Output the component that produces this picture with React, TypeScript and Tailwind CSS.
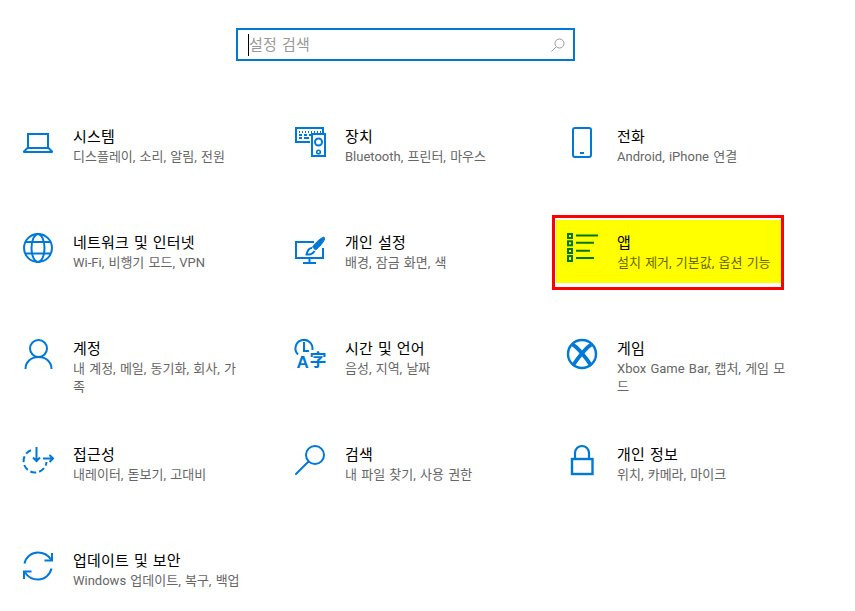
import React from 'react';

function Icon({ children }: { children: React.ReactNode }) {
  return (
    <svg width="32" height="32" viewBox="0 0 32 32" fill="none" stroke="currentColor" strokeWidth="2" className="shrink-0 overflow-visible">
      {children}
    </svg>
  );
}

const icons: Record<string, React.ReactNode> = {
  system: (
    <>
      <path d="M5 21V7h20v14" />
      <path d="M4.500 21h21l3.500 3.500V25H1v-.5z" strokeLinejoin="round" />
    </>
  ),
  devices: (
    <>
      <path d="M15 15H1V1h27v5" />
      <path d="M4 5h1M7 5h1M10 5h1M13 5h1M16 5h1M19 5h1M22 5h1M25 5h1M4 8h3M9 8h3M14 8h2M4 11h3M9 11h5" strokeWidth="1.800" />
      <rect x="17" y="7" width="13" height="22" />
      <circle cx="23.500" cy="15" r="3.500" />
      <circle cx="23.500" cy="25" r="1.800" strokeWidth="1.600" />
    </>
  ),
  phone: (
    <>
      <rect x="6" y="1" width="18" height="29" rx="2" />
      <path d="M13 26h4" />
    </>
  ),
  network: (
    <>
      <circle cx="15" cy="15" r="14" />
      <ellipse cx="15" cy="15" rx="6.500" ry="14" />
      <path d="M2.500 9h25M2.500 20.500h25" />
    </>
  ),
  personalize: (
    <>
      <path d="M19 9H1v16h27V15" />
      <path d="M14.500 25v4.500M8 30h13" />
      <path d="M29 4c-3 .8-8.500 5.500-11.500 10l3 3c3.800-2.800 8-7.800 9-10.800z" fill="currentColor" strokeWidth="1" />
      <path d="M17 15c-3 0-4.500 2-5.500 6.500 3.800.5 6.500-.8 8-3.500" strokeWidth="2" />
    </>
  ),
  apps: (
    <>
      <rect x="1" y="1" width="4" height="4" />
      <rect x="1" y="8.300" width="4" height="4" />
      <rect x="1" y="16" width="4" height="4" />
      <rect x="1" y="23" width="4" height="5" />
      <path d="M9 2.500h22M9 9.700h18M9 17.700h14M9 25h18" />
    </>
  ),
  account: (
    <>
      <circle cx="15.500" cy="9.500" r="8.500" />
      <path d="M2.500 30c0-6.500 5-12 13-12s13 5.500 13 12" />
    </>
  ),
  time: (
    <>
      <path d="M3 15.500A8.500 8.500 0 1 1 17.300 11" />
      <path d="M9 3v9h5" />
      <text x="1.500" y="29" fill="currentColor" stroke="none" fontFamily="'Liberation Sans', sans-serif" fontWeight="700" fontSize="17">A</text>
      <text x="14.500" y="26.500" fill="currentColor" stroke="none" fontFamily="'Noto Sans CJK SC', sans-serif" fontWeight="700" fontSize="17">字</text>
    </>
  ),
  xbox: (
    <>
      <circle cx="15" cy="15" r="14" strokeWidth="2.400" />
      <path d="M5.500 5.500C10 7.500 20 20 24 26.500M24.500 5.500C20 7.500 10 20 6 26.500" strokeWidth="3.800" />
    </>
  ),
  access: (
    <>
      <path d="M8 5.200A11.500 11.500 0 1 0 23.500 17" strokeDasharray="6 3" />
      <path d="M13.500 2v14M10 12.500l3.500 3.500 3.500-3.500" />
      <path d="M20 13.500h10M26.500 10l3.500 3.500-3.500 3.500" />
    </>
  ),
  search: (
    <>
      <circle cx="20" cy="10" r="9" />
      <path d="M13.500 16.500 1 29" strokeLinecap="round" />
    </>
  ),
  lock: (
    <>
      <rect x="5" y="14" width="20.500" height="15" strokeWidth="2.400" />
      <path d="M8 14V8a7 7 0 0 1 14 0v6" strokeWidth="2.200" />
    </>
  ),
  update: (
    <>
      <path d="M1.500 12.500C3 6 8.500 1.500 15 1.500c5.500 0 10 2.500 13 7" />
      <path d="M29 2v7.500h-7.500" />
      <path d="M28.500 17.500C27 24 21.500 28.500 15 28.500c-5.500 0-10-2.500-13-7" />
      <path d="M1 28v-7.500h7.500" />
    </>
  ),
};

const items = [
  { id: 'system', title: '시스템', sub: '디스플레이, 소리, 알림, 전원' },
  { id: 'devices', title: '장치', sub: 'Bluetooth, 프린터, 마우스' },
  { id: 'phone', title: '전화', sub: 'Android, iPhone 연결' },
  { id: 'network', title: '네트워크 및 인터넷', sub: 'Wi-Fi, 비행기 모드, VPN' },
  { id: 'personalize', title: '개인 설정', sub: '배경, 잠금 화면, 색' },
  { id: 'apps', title: '앱', sub: '설치 제거, 기본값, 옵션 기능', highlight: true },
  { id: 'account', title: '계정', sub: '내 계정, 메일, 동기화, 회사, 가족' },
  { id: 'time', title: '시간 및 언어', sub: '음성, 지역, 날짜' },
  { id: 'xbox', title: '게임', sub: 'Xbox Game Bar, 캡처, 게임 모드' },
  { id: 'access', title: '접근성', sub: '내레이터, 돋보기, 고대비' },
  { id: 'search', title: '검색', sub: '내 파일 찾기, 사용 권한' },
  { id: 'lock', title: '개인 정보', sub: '위치, 카메라, 마이크' },
  { id: 'update', title: '업데이트 및 보안', sub: 'Windows 업데이트, 복구, 백업' },
];

function Labels({ title, sub, subColor }: { title: string; sub: string; subColor: string }) {
  return (
    <div className="ml-[18px] w-[170px] shrink-0">
      <div className="text-[15px] leading-5 tracking-[0.2px] [word-spacing:1px] text-black">{title}</div>
      <div className={`mt-px text-[13px] leading-[18px] [word-spacing:1px] ${subColor}`}>{sub}</div>
    </div>
  );
}

function Tile({ item }: { item: (typeof items)[number] }) {
  if (item.highlight) {
    return (
      <div className="h-[75px] border-[3px] border-[#ff0000] pt-[2px] pb-1 pl-px">
        <div className="flex h-full bg-[#ffff00] pl-[11px] pt-[13px] text-[#007800]">
          <Icon>{icons[item.id]}</Icon>
          <Labels title={item.title} sub={item.sub} subColor="text-[#666600]" />
        </div>
      </div>
    );
  }
  return (
    <div className="flex h-[75px] pl-[15px] pt-[18px] text-[#0078d7]">
      <Icon>{icons[item.id]}</Icon>
      <Labels title={item.title} sub={item.sub} subColor="text-[#666666]" />
    </div>
  );
}

export default function App() {
  return (
    <div className="h-[611px] w-[855px] overflow-hidden bg-white font-['Roboto','Noto_Sans_CJK_KR',sans-serif]">
      <div className="pt-7 pl-[236px]">
        <div className="flex h-[33px] w-[339px] items-center border-2 border-[#0078d7] pl-[10px] pr-2">
          <div className="h-[22px] w-px bg-black" />
          <div className="mt-[2px] flex-1 text-[15px] tracking-[0.2px] [word-spacing:1px] text-[#999999]">설정 검색</div>
          <svg width="14" height="14" viewBox="0 0 14 14" fill="none" stroke="#999999" strokeWidth="1">
            <circle cx="8.500" cy="5.500" r="4.500" />
            <path d="M5.300 8.700.5 13.500" />
          </svg>
        </div>
      </div>
      <div className="mt-12 grid grid-cols-[repeat(3,232px)] gap-x-10 gap-y-[31px] pl-2">
        {items.map((item) => (
          <Tile key={item.id} item={item} />
        ))}
      </div>
    </div>
  );
}
